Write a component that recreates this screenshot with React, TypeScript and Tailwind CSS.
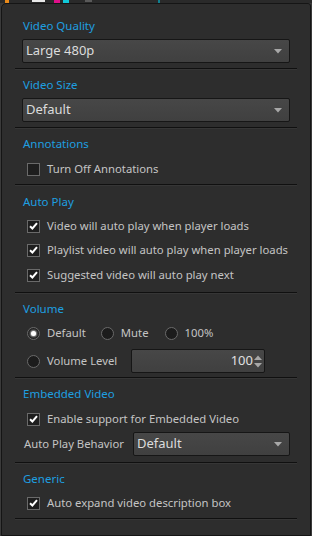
import React from "react";

const font = { fontFamily: '"Segoe UI", "Noto Sans", "Open Sans", sans-serif' };

function Sep({ className = "" }: { className?: string }) {
  return <div className={"mx-[13px] h-[2px] border-t border-[#101010] border-b border-b-[#363636] " + className} />;
}

function Label({ children, className = "" }: { children: React.ReactNode; className?: string }) {
  return <div className={"h-[16px] leading-[16px] pl-[21px] text-[11.5px] text-[#1e9fe0] " + className}>{children}</div>;
}

function Arrow() {
  return (
    <svg width="8" height="5" viewBox="0 0 8 5" className="shrink-0">
      <path d="M0 0 H8 L4 4.5 Z" fill="#a8a8a8" />
    </svg>
  );
}

function Select({ value, className = "" }: { value: string; className?: string }) {
  return (
    <div className={"h-[24px] flex items-center justify-between rounded-[2px] border border-[#161616] bg-gradient-to-b from-[#474747] to-[#404040] pl-[3px] pr-[7px] text-[13px] text-[#dcdcdc] " + className}>
      <span>{value}</span>
      <Arrow />
    </div>
  );
}

function Check({ checked }: { checked: boolean }) {
  return (
    <div className="w-[13px] h-[13px] shrink-0 border border-[#6a6a6a] bg-[#1e1e1e] flex items-center justify-center">
      {checked && (
        <svg width="9" height="8" viewBox="0 0 9 8">
          <path d="M1 4.2 L3.4 6.5 L8 1.2" stroke="#ffffff" strokeWidth="2" fill="none" />
        </svg>
      )}
    </div>
  );
}

function CheckRow({ label, checked = true, className = "" }: { label: string; checked?: boolean; className?: string }) {
  return (
    <div className={"h-[24px] flex items-center pl-[25px] gap-[7px] text-[11.3px] text-[#c4c4c4] " + className}>
      <Check checked={checked} />
      <span>{label}</span>
    </div>
  );
}

function Radio({ on }: { on: boolean }) {
  return (
    <div className="w-[13px] h-[13px] shrink-0 rounded-full border border-[#6a6a6a] bg-[#1c1c1c] flex items-center justify-center">
      {on && <div className="w-[5px] h-[5px] rounded-full bg-white shadow-[0_0_2px_1px_rgba(255,255,255,0.6)]" />}
    </div>
  );
}

export default function App() {
  return (
    <div className="w-[312px] h-[536px] bg-[#3a3a3a] flex flex-col overflow-hidden" style={font}>
      <div className="h-[3px] relative shrink-0 bg-[#2a2a2a]">
        <div className="absolute left-[5px] top-0 w-[4px] h-[3px] bg-[#e88a1a]" />
        <div className="absolute left-[32px] top-0 w-[13px] h-[2px] bg-[#e8e8e8]" />
        <div className="absolute left-[54px] top-0 w-[6px] h-[3px] bg-[#e0108a]" />
        <div className="absolute left-[63px] top-0 w-[6px] h-[3px] bg-[#10c8d8]" />
        <div className="absolute left-[85px] top-0 w-[7px] h-[2px] bg-[#5a5a5a]" />
        <div className="absolute left-[158px] top-0 w-[2px] h-[3px] bg-[#108090]" />
      </div>
      <div className="ml-[1px] w-[310px] flex-1 rounded-tl-[5px] rounded-tr-[3px] border border-[#151515] bg-[#2d2d2d] pt-[14px]">
        <Label>Video Quality</Label>
        <Select value="Large 480p" className="mt-[5px] mx-[20px]" />
        <Sep className="mt-[5px]" />

        <Label className="mt-[7px]">Video Size</Label>
        <Select value="Default" className="mt-[5px] mx-[20px]" />
        <Sep className="mt-[5px]" />

        <Label className="mt-[7px]">Annotations</Label>
        <CheckRow label="Turn Off Annotations" checked={false} className="mt-[5px]" />
        <Sep className="mt-[3px]" />

        <Label className="mt-[8px]">Auto Play</Label>
        <CheckRow label="Video will auto play when player loads" className="mt-[4px]" />
        <CheckRow label="Playlist video will auto play when player loads" />
        <CheckRow label="Suggested video will auto play next" className="mt-[1px]" />
        <Sep className="mt-[5px]" />

        <Label className="mt-[7px]">Volume</Label>
        <div className="mt-[4px] h-[24px] flex items-center pl-[25px] text-[11.3px] text-[#c4c4c4]">
          <Radio on={true} />
          <span className="ml-[7px]">Default</span>
          <div className="ml-[15px]"><Radio on={false} /></div>
          <span className="ml-[7px]">Mute</span>
          <div className="ml-[16px]"><Radio on={false} /></div>
          <span className="ml-[7px]">100%</span>
        </div>
        <div className="mt-[4px] h-[24px] flex items-center pl-[25px] text-[11.3px] text-[#c4c4c4]">
          <Radio on={false} />
          <span className="ml-[7px] w-[82px]">Volume Level</span>
          <div className="ml-[2px] w-[134px] h-[24px] flex items-center justify-end rounded-[2px] border border-[#161616] bg-gradient-to-b from-[#474747] to-[#404040] pr-[2px] text-[13px]">
            <span className="text-[#e0e0e0]">100</span>
            <div className="ml-[1px] flex flex-col gap-[3px]">
              <svg width="8" height="5" viewBox="0 0 8 5"><path d="M0 5 H8 L4 0.5 Z" fill="#a8a8a8" /></svg>
              <svg width="8" height="5" viewBox="0 0 8 5"><path d="M0 0 H8 L4 4.5 Z" fill="#a8a8a8" /></svg>
            </div>
          </div>
        </div>
        <Sep className="mt-[4px]" />

        <Label className="mt-[7px]">Embedded Video</Label>
        <CheckRow label="Enable support for Embedded Video" className="mt-[5px]" />
        <div className="mt-[1px] h-[24px] flex items-center pl-[22px] text-[11.3px] text-[#c4c4c4]">
          <span className="w-[109px]">Auto Play Behavior</span>
          <Select value="Default" className="flex-1 mr-[20px]" />
        </div>
        <Sep className="mt-[6px]" />

        <Label className="mt-[7px]">Generic</Label>
        <CheckRow label="Auto expand video description box" className="mt-[4px]" />
        <Sep className="mt-[3px]" />
      </div>
    </div>
  );
}
